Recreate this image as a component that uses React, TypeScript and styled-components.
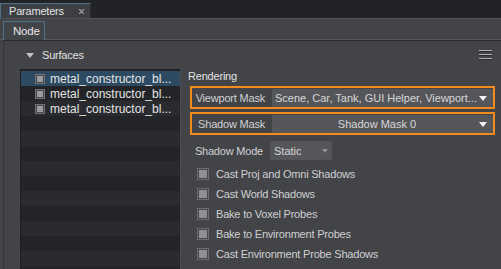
import styled, { createGlobalStyle } from "styled-components";

const GlobalStyle = createGlobalStyle`
  html, body {
    margin: 0;
    padding: 0;
    background: #222326;
  }
  body {
    font-family: "Liberation Sans", Arial, sans-serif;
    font-size: 11px;
    letter-spacing: -0.2px;
    color: #d2d3d4;
  }
`;

const Window = styled.div`
  width: 501px;
  height: 269px;
  display: flex;
  flex-direction: column;
  overflow: hidden;
  background: #222326;
`;

const TopBar = styled.div`
  height: 18px;
  display: flex;
  align-items: flex-end;
  flex-shrink: 0;
`;

const DockTab = styled.div`
  width: 91px;
  height: 15px;
  display: flex;
  align-items: center;
  justify-content: space-between;
  padding: 0 6px 0 8px;
  box-sizing: border-box;
  background: #3d3f43;
  border-top: 1px solid #4f7189;
  border-left: 1px solid #4f7189;
  border-right: 1px solid #2c2d30;
  color: #e2e3e4;
  font-size: 11px;
`;

const CloseMark = styled.svg`
  width: 5px;
  height: 5px;
  margin-top: 1px;
`;

const Panel = styled.div`
  flex: 1;
  display: flex;
  flex-direction: column;
  background: #434448;
  border-top: 1px solid #505256;
  min-height: 0;
`;

const PageTabs = styled.div`
  height: 20px;
  display: flex;
  align-items: flex-end;
  padding-left: 3px;
  border-bottom: 1px solid #56585c;
  flex-shrink: 0;
`;

const PageTab = styled.div<{ $active?: boolean }>`
  width: 42px;
  height: 19px;
  box-sizing: border-box;
  padding: 3px 0 0 9px;
  margin-bottom: -1px;
  background: #434448;
  border: 1px solid #4f7189;
  border-bottom: none;
  color: ${(p) => (p.$active ? "#e6e7e8" : "#a0a1a3")};
  font-size: 11.5px;
`;

const Content = styled.div`
  flex: 1;
  display: flex;
  flex-direction: column;
  margin-left: 3px;
  border-top: 1px solid #2a2b2e;
  border-left: 1px solid #36373a;
  min-height: 0;
`;

const SectionHeader = styled.div`
  height: 28px;
  display: flex;
  align-items: center;
  padding: 0 9px 0 22px;
  gap: 8px;
  color: #e0e1e2;
  flex-shrink: 0;
`;

const HeaderTitle = styled.span`
  flex: 1;
`;

const Body = styled.div`
  flex: 1;
  display: grid;
  grid-template-columns: 161px 1fr;
  padding-left: 16px;
  min-height: 0;
`;

const List = styled.div`
  border: 1px solid #1f2022;
  border-right: 1px solid #4d4e52;
  border-bottom: none;
  padding-top: 1px;
  background: #232427;
  display: flex;
  flex-direction: column;
  overflow: hidden;
`;

const ListRow = styled.div<{ $selected?: boolean; $odd?: boolean }>`
  height: 15px;
  flex-shrink: 0;
  display: flex;
  align-items: center;
  gap: 5px;
  padding-left: 14px;
  color: #e4e5e6;
  font-size: 12px;
  letter-spacing: 0;
  white-space: nowrap;
  background: ${(p) => (p.$selected ? "#2c4a62" : p.$odd ? "#2a2b2e" : "#232427")};
`;

const ListBox = styled.span`
  width: 8px;
  height: 8px;
  border: 1px solid #6f7073;
  background: #9a9b9d;
  box-shadow: inset 0 0 0 1px #4a4b4f;
  flex-shrink: 0;
`;

const Props = styled.div`
  display: flex;
  flex-direction: column;
  padding-left: 7px;
`;

const GroupTitle = styled.div`
  height: 14px;
  line-height: 14px;
  margin-bottom: 3px;
  color: #e0e1e2;
`;

const Highlight = styled.div`
  width: 305px;
  height: 23px;
  box-sizing: border-box;
  margin-left: 2px;
  margin-bottom: 3px;
  border: 2px solid #f28b1b;
  display: flex;
  align-items: flex-end;
  gap: 7px;
`;

const Label = styled.span<{ $w: number }>`
  width: ${(p) => p.$w}px;
  text-align: right;
  align-self: center;
  flex-shrink: 0;
  color: #cfd0d2;
  white-space: nowrap;
`;

const Select = styled.div`
  flex: 1;
  height: 18px;
  display: flex;
  align-items: center;
  padding: 0 6px 0 3px;
  box-sizing: border-box;
  background: #55565a;
  border-radius: 2px;
  color: #d6d7d8;
  letter-spacing: 0;
  white-space: nowrap;
`;

const SelectText = styled.span<{ $center?: boolean }>`
  flex: 1;
  overflow: hidden;
  text-align: ${(p) => (p.$center ? "center" : "left")};
`;

const Arrow = styled.span<{ $dim?: boolean }>`
  width: 0;
  height: 0;
  border-left: ${(p) => (p.$dim ? 3 : 4.5)}px solid transparent;
  border-right: ${(p) => (p.$dim ? 3 : 4.5)}px solid transparent;
  border-top: ${(p) => (p.$dim ? 4 : 5)}px solid ${(p) => (p.$dim ? "#8e8f92" : "#f2f2f2")};
  flex-shrink: 0;
`;

const Row = styled.div`
  height: 19px;
  display: flex;
  align-items: center;
  gap: 7px;
  margin-top: 3px;
  margin-bottom: 4px;
`;

const SmallSelect = styled(Select)`
  flex: none;
  width: 62px;
  height: 19px;
  padding: 0 4px;
`;

const CheckRow = styled.label`
  height: 20px;
  display: flex;
  align-items: center;
  gap: 7px;
  padding-left: 9px;
  color: #cfd0d2;
`;

const CheckBox = styled.span`
  width: 10px;
  height: 10px;
  border: 1px solid #6c6d70;
  background: #8f9093;
  box-shadow: inset 0 0 0 1px #45464a;
  flex-shrink: 0;
`;

const Triangle = styled.span`
  width: 0;
  height: 0;
  border-left: 4px solid transparent;
  border-right: 4px solid transparent;
  border-top: 5px solid #c2c3c5;
`;

const Burger = styled.div`
  width: 13px;
  display: flex;
  flex-direction: column;
  gap: 2px;
`;

const BurgerLine = styled.span`
  height: 1px;
  background: #b0b1b3;
  border-bottom: 1px solid #2a2b2e;
`;

const surfaces = ["metal_constructor_bl...", "metal_constructor_bl...", "metal_constructor_bl..."];
const checks = [
  "Cast Proj and Omni Shadows",
  "Cast World Shadows",
  "Bake to Voxel Probes",
  "Bake to Environment Probes",
  "Cast Environment Probe Shadows",
];

export default function App() {
  const rows = Array.from({ length: 14 }, (_, i) => i);
  return (
    <Window>
      <GlobalStyle />
      <TopBar>
        <DockTab>
          Parameters
          <CloseMark viewBox="0 0 5 5">
            <path d="M0 0L5 5M5 0L0 5" stroke="#a3a4a6" strokeWidth="1.2" />
          </CloseMark>
        </DockTab>
      </TopBar>
      <Panel>
        <PageTabs>
          <PageTab $active>Node</PageTab>
        </PageTabs>
        <Content>
          <SectionHeader>
            <Triangle />
            <HeaderTitle>Surfaces</HeaderTitle>
            <Burger>
              <BurgerLine />
              <BurgerLine />
              <BurgerLine />
            </Burger>
          </SectionHeader>
          <Body>
            <List>
              {rows.map((i) => (
                <ListRow key={i} $selected={i === 0} $odd={i % 2 === 0}>
                  {surfaces[i] && (
                    <>
                      <ListBox />
                      {surfaces[i]}
                    </>
                  )}
                </ListRow>
              ))}
            </List>
            <Props>
              <GroupTitle>Rendering</GroupTitle>
              <Highlight>
                <Label $w={73}>Viewport Mask</Label>
                <Select>
                  <SelectText>Scene, Car, Tank, GUI Helper, Viewport...</SelectText>
                  <Arrow />
                </Select>
              </Highlight>
              <Highlight>
                <Label $w={73}>Shadow Mask</Label>
                <Select>
                  <SelectText $center>Shadow Mask 0</SelectText>
                  <Arrow />
                </Select>
              </Highlight>
              <Row>
                <Label $w={75}>Shadow Mode</Label>
                <SmallSelect>
                  <SelectText>Static</SelectText>
                  <Arrow $dim />
                </SmallSelect>
              </Row>
              {checks.map((c) => (
                <CheckRow key={c}>
                  <CheckBox />
                  {c}
                </CheckRow>
              ))}
            </Props>
          </Body>
        </Content>
      </Panel>
    </Window>
  );
}
